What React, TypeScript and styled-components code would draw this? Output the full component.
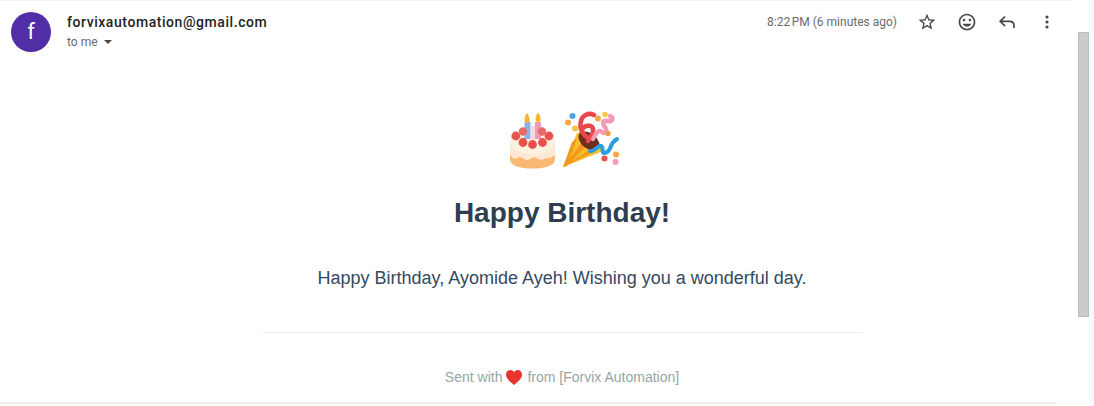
import React from "react";
import styled, { createGlobalStyle } from "styled-components";

const Global = createGlobalStyle`
  html, body { margin: 0; padding: 0; background: #fff; overflow: hidden; }
  body { width: 1094px; height: 406px; }
`;

const Page = styled.div`
  display: flex;
  width: 1094px;
  height: 406px;
  overflow: hidden;
  background: #fff;
`;

const Main = styled.main`
  width: 1071px;
  flex: none;
  display: flex;
  flex-direction: column;
  border-top: 1px solid #f1f3f4;
  box-sizing: border-box;
`;

const Header = styled.header`
  display: flex;
  align-items: flex-start;
  height: 65px;
  flex: none;
  padding: 11px 4px 0 11px;
  box-sizing: border-box;
`;

const Avatar = styled.div`
  width: 40px;
  height: 40px;
  flex: none;
  border-radius: 50%;
  background: #512da8;
  color: #fff;
  display: flex;
  align-items: center;
  justify-content: center;
  font: 400 22px/40px Roboto, sans-serif;
`;

const Sender = styled.div`
  margin-left: 16px;
  flex: 1;
  min-width: 0;
`;

const Email = styled.div`
  font: 500 14px/20px Roboto, sans-serif;
  letter-spacing: 0.56px;
  color: #1f1f1f;
`;

const ToMe = styled.div`
  display: flex;
  align-items: center;
  height: 20px;
  font: 400 12px/20px Roboto, sans-serif;
  color: #6b6b6b;
`;

const Caret = styled.span`
  width: 0;
  height: 0;
  margin-left: 6px;
  border-left: 4px solid transparent;
  border-right: 4px solid transparent;
  border-top: 4px solid #444746;
`;

const Actions = styled.div`
  display: flex;
  align-items: center;
  height: 20px;
`;

const Time = styled.span`
  font: 400 12px/20px Roboto, sans-serif;
  color: #6b6b6b;
  margin-right: 10px;
`;

const IconButton = styled.span`
  width: 40px;
  height: 20px;
  display: flex;
  align-items: center;
  justify-content: center;
  color: #444746;
  svg { display: block; }
`;

const Body = styled.section`
  margin-left: 72px;
  width: 980px;
  flex: 1;
  display: flex;
  flex-direction: column;
  align-items: center;
`;

const BottomRule = styled.hr`
  width: 1056px;
  height: 2px;
  border: 0;
  margin: 0 0 2px;
  background: #f0f0f0;
  flex: none;
`;

const EmojiRow = styled.div`
  display: flex;
  margin-top: 39px;
  height: 70px;
  svg { display: block; flex: none; filter: blur(0.55px); }
`;

const Title = styled.h1`
  margin: 19px 0 0;
  font: 700 28px/38px "Liberation Sans", Arial, sans-serif;
  color: #2c3e50;
`;

const Message = styled.p`
  margin: 33px 0 0;
  font: 400 18px/27px "Liberation Sans", Arial, sans-serif;
  color: #34495e;
`;

const Divider = styled.hr`
  width: 600px;
  height: 1px;
  border: 0;
  background: #eeeeee;
  margin: 40px 0 0;
`;

const Footer = styled.p`
  display: flex;
  align-items: center;
  margin: 34px 0 0;
  font: 400 14px/20px "Liberation Sans", Arial, sans-serif;
  color: #95a5a6;
  white-space: pre;
`;

const HeartIcon = styled.svg`
  margin: 1px 5px 0 4px;
  flex: none;
`;

const Gutter = styled.aside`
  flex: 1;
  display: flex;
  padding: 32px 0 0 7px;
  box-sizing: border-box;
`;

const Thumb = styled.div`
  width: 11px;
  height: 285px;
  background: #cbcbcb;
  border: 1px solid #bcbcbc;
  box-sizing: border-box;
`;

const Strip = styled.div`
  flex: 1;
  margin-top: -32px;
  background: #f8fafd;
`;

const Icon = ({ d }: { d: string }) => (
  <svg width="20" height="20" viewBox="0 0 24 24" fill="currentColor">
    <path d={d} />
  </svg>
);

const Cake = () => (
  <svg width="60" height="70" viewBox="0 0 60 70">
    <path d="M11 40 V54 C11 61 21 63.5 33.5 63.5 S56 61 56 54 V40 Z" fill="#f9b873" />
    <path d="M11 38 V50 C14 54 17 55 19.5 52.5 C22 50.5 25 55 28 55 C31 55 33 51.5 36 52.5 C39 53.5 41 56 45 54 C48 52.5 52 54 56 50 V38 Z" fill="#fde9d6" />
    <ellipse cx="33.5" cy="37" rx="22.5" ry="12" fill="#fff0e0" />
    <rect x="25.5" y="17" width="6" height="17" fill="#86b4ea" />
    <rect x="36" y="17" width="6" height="17" fill="#f49ab8" />
    <rect x="31.5" y="21" width="4.5" height="13" fill="#f6d8dc" />
    <path d="M28 8 C31 12 32 17 28 18 C24.5 17 25 12 28 8 Z" fill="#f8b430" />
    <path d="M39 7.5 C42 11.5 43 16.5 39 17.5 C35.5 16.5 36 11.5 39 7.5 Z" fill="#f8b430" />
    <circle cx="24" cy="26.5" r="4.2" fill="#e56b66" />
    <circle cx="43" cy="26.5" r="4.2" fill="#e56b66" />
    <circle cx="16.8" cy="31" r="4.4" fill="#e8534f" />
    <circle cx="50" cy="31" r="4.4" fill="#e8534f" />
    <circle cx="24" cy="37.5" r="4.4" fill="#ea4f4b" />
    <circle cx="33.5" cy="39.5" r="4.4" fill="#ea4f4b" />
    <circle cx="43.5" cy="37.5" r="4.4" fill="#ea4f4b" />
  </svg>
);

const Popper = () => (
  <svg width="66" height="70" viewBox="0 0 66 70">
    <path d="M4 62 L18 28 C24 24 41 35 44 46 Z" fill="#fbbc2d" />
    <path d="M4 62 L13 37 L18 33 L9 59 Z M4 62 L25 35 L30 38 L8 61 Z M4 62 L35 42 L38 45 Z" fill="#f39a1c" />
    <ellipse cx="30" cy="36" rx="12" ry="7.5" transform="rotate(38 30 36)" fill="#6e2e20" />
    <path d="M29 33 C24 30 20 24 22 16 C23 11 29 7 35 10 M23 25 C25 20 33 19 34 24 C35 30 30 33 29 36" fill="none" stroke="#e9474c" strokeWidth="4.6" strokeLinecap="round" />
    <path d="M34 34 C37 27 41 24 43 27 C45 30 49 26 46 22 C43 18 43 15 49 16 C54 17 55 13 51 11" fill="none" stroke="#f29bb4" strokeWidth="4.4" strokeLinecap="round" />
    <path d="M31 46 C35 48 38 40 42 41 C45 42 42 48 45 48 C49 48 51 44 52 41 C53 38 55 36 58 34" fill="none" stroke="#2a9fdf" strokeWidth="4" strokeLinecap="round" />
    <circle cx="13.5" cy="11" r="3" fill="#4aa3e8" />
    <circle cx="9" cy="17.5" r="3" fill="#f5a742" />
    <circle cx="16" cy="23.5" r="3" fill="#f7c34d" />
    <circle cx="39" cy="13.5" r="3" fill="#f3a94a" />
    <circle cx="46" cy="9.5" r="2.8" fill="#f7ca45" />
    <circle cx="49" cy="28.5" r="2.7" fill="#f0a040" />
    <circle cx="45.5" cy="53.5" r="3" fill="#e9504f" />
    <circle cx="57" cy="49.5" r="3" fill="#f5a742" />
    <circle cx="56.5" cy="57" r="3" fill="#f29bb4" />
  </svg>
);

export default function App() {
  return (
    <Page>
      <Global />
      <Main>
        <Header>
          <Avatar>f</Avatar>
          <Sender>
            <Email>forvixautomation@gmail.com</Email>
            <ToMe>
              to me
              <Caret />
            </ToMe>
          </Sender>
          <Actions>
            <Time>8:22{"\u202f"}PM (6 minutes ago)</Time>
            <IconButton>
              <Icon d="M22 9.24l-7.19-.62L12 2 9.19 8.63 2 9.24l5.46 4.73L5.82 21 12 17.27 18.18 21l-1.63-7.03L22 9.24zM12 15.4l-3.76 2.27 1-4.28-3.32-2.88 4.38-.38L12 6.1l1.71 4.04 4.38.38-3.32 2.88 1 4.28L12 15.4z" />
            </IconButton>
            <IconButton>
              <Icon d="M11.99 2C6.47 2 2 6.48 2 12s4.47 10 9.99 10C17.52 22 22 17.52 22 12S17.52 2 11.99 2zM12 20c-4.42 0-8-3.58-8-8s3.58-8 8-8 8 3.58 8 8-3.58 8-8 8zm3.5-9c.83 0 1.5-.67 1.5-1.5S16.33 8 15.5 8 14 8.67 14 9.5s.67 1.5 1.5 1.5zm-7 0c.83 0 1.5-.67 1.5-1.5S9.33 8 8.5 8 7 8.67 7 9.5 7.67 11 8.5 11zm3.5 6.5c2.33 0 4.31-1.46 5.11-3.5H6.89c.8 2.04 2.78 3.5 5.11 3.5z" />
            </IconButton>
            <IconButton>
              <svg width="20" height="20" viewBox="0 0 20 20" fill="none" stroke="currentColor" strokeWidth="1.7">
                <path d="M8 4.5 L3.2 9.3 L8 14.1 M3.2 9.3 H12.5 C15.5 9.3 17 11.3 17 13.8 V16" />
              </svg>
            </IconButton>
            <IconButton>
              <svg width="20" height="20" viewBox="0 0 20 20" fill="currentColor">
                <circle cx="10" cy="5" r="1.6" />
                <circle cx="10" cy="10" r="1.6" />
                <circle cx="10" cy="15" r="1.6" />
              </svg>
            </IconButton>
          </Actions>
        </Header>
        <Body>
          <EmojiRow>
            <Cake />
            <Popper />
          </EmojiRow>
          <Title>Happy Birthday!</Title>
          <Message>Happy Birthday, Ayomide Ayeh! Wishing you a wonderful day.</Message>
          <Divider />
          <Footer>
            Sent with
            <HeartIcon width="16" height="15" viewBox="0 0 16 15">
              <path d="M8 15 C5 12.5 0 9 0 4.6 C0 1.8 2 0 4.2 0 C5.8 0 7.2 .8 8 2.3 C8.8 .8 10.2 0 11.8 0 C14 0 16 1.8 16 4.6 C16 9 11 12.5 8 15 Z" fill="#e8352e" />
            </HeartIcon>
            from [Forvix Automation]
          </Footer>
        </Body>
        <BottomRule />
      </Main>
      <Gutter>
        <Thumb />
        <Strip />
      </Gutter>
    </Page>
  );
}
